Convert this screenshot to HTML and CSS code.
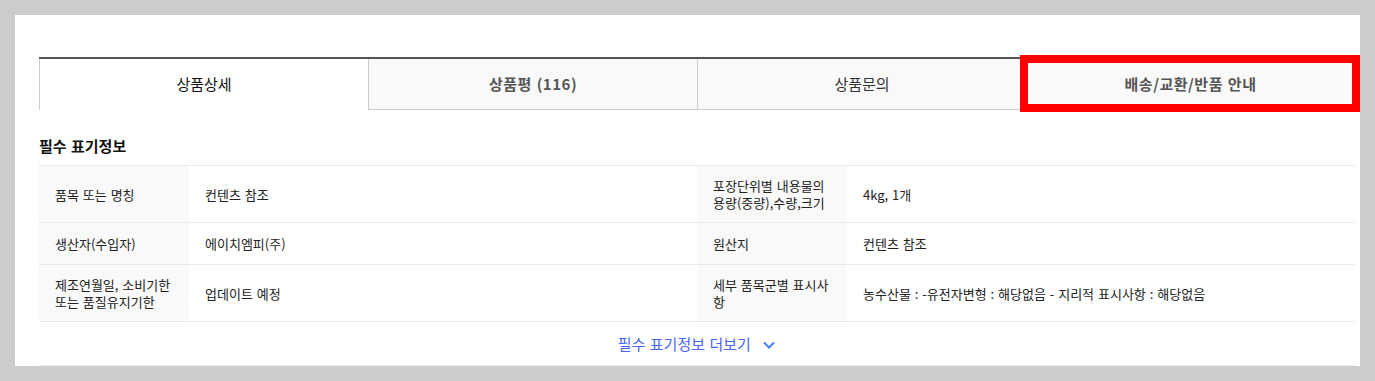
FILE: index.html
```html
<!doctype html>
<html>
<head>
	<meta charset="utf-8">
	<title>상품 상세 정보</title>
	<link rel="stylesheet" href="styles.css">
</head>
<body>
	<div class="panel">
		<div class="tabs">
			<div class="tab active">상품상세</div>
			<div class="tab strong">상품평 (116)</div>
			<div class="tab">상품문의</div>
			<div class="tab strong marked">배송/교환/반품 안내</div>
		</div>

		<h3 class="info-title">필수 표기정보</h3>
		<div class="info-grid">
			<div class="cell head">품목 또는 명칭</div>
			<div class="cell">컨텐츠 참조</div>
			<div class="cell head">포장단위별 내용물의<br>용량(중량),수량,크기</div>
			<div class="cell">4kg, 1개</div>

			<div class="cell head">생산자(수입자)</div>
			<div class="cell">에이치엠피(주)</div>
			<div class="cell head">원산지</div>
			<div class="cell">컨텐츠 참조</div>

			<div class="cell head">제조연월일, 소비기한<br>또는 품질유지기한</div>
			<div class="cell">업데이트 예정</div>
			<div class="cell head">세부 품목군별 표시사<br>항</div>
			<div class="cell">농수산물 : -유전자변형 : 해당없음 - 지리적 표시사항 : 해당없음</div>
		</div>
		<div class="more">
			<a href="#" class="more-link">필수 표기정보 더보기
				<svg width="14" height="10" viewBox="0 0 14 10"><path d="M2 2.5 L7 7.5 L12 2.5" fill="none" stroke="#4a7cf2" stroke-width="2"/></svg>
			</a>
		</div>
	</div>
</body>
</html>
```

FILE: styles.css
```css
html, body {
	margin: 0;
	padding: 0;
}

body {
	background: #cccccc;
	padding: 15px;
	font-family: "Noto Sans CJK KR", "Noto Sans", sans-serif;
	color: #333;
}

.panel {
	background: #fff;
	height: 351px;
	padding: 42px 5px 0 24px;
	box-sizing: border-box;
	overflow: hidden;
}

.tabs {
	display: grid;
	grid-template-columns: repeat(4, 1fr);
	border-top: 2px solid #555;
}

.tab {
	position: relative;
	height: 50px;
	line-height: 50px;
	text-align: center;
	font-size: 15px;
	color: #333;
	background: #f9f9f9;
	border-left: 1px solid #ccc;
	border-bottom: 1px solid #ccc;
	word-spacing: 1px;
}

.tab:last-child {
	border-right: 1px solid #ccc;
}

.tab.active {
	background: #fff;
	color: #111;
	border-bottom-color: #fff;
}

.tab.strong {
	font-weight: bold;
	color: #555;
	letter-spacing: 0.5px;
}

/* red annotation frame drawn over the last tab */
.tab.marked:after {
	content: "";
	position: absolute;
	top: -4px;
	left: -7px;
	right: -6px;
	bottom: -3px;
	border: 8px solid #ff0000;
}

.info-title {
	margin: 26px 0 9px;
	font-size: 15px;
	line-height: 20px;
	font-weight: bold;
	color: #111;
	word-spacing: 1px;
}

.info-grid {
	display: grid;
	grid-template-columns: 150px 1fr 150px 1fr;
	border-top: 1px solid #eaeaea;
	font-size: 13px;
	line-height: 17px;
	color: #222;
	word-spacing: 1px;
}

.cell {
	display: flex;
	align-items: center;
	min-height: 42px;
	padding: 11px 16px;
	box-sizing: border-box;
	border-bottom: 1px solid #eaeaea;
}

.cell.head {
	background: #f9f9f9;
}

.more {
	text-align: center;
	padding: 12px 0;
	line-height: 18px;
	border-bottom: 1px solid #eaeaea;
}

.more-link {
	color: #4a66f0;
	font-size: 15px;
	text-decoration: none;
	word-spacing: 1px;
}

.more-link svg {
	margin-left: 7px;
	vertical-align: 0;
}
```
